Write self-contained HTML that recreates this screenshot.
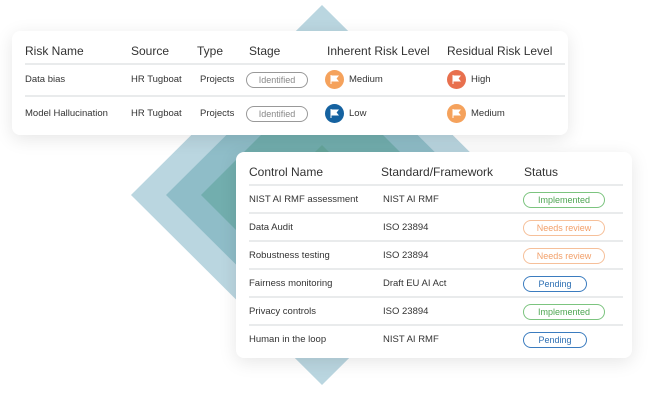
<!DOCTYPE html>
<html><head><style>
*{margin:0;padding:0;box-sizing:border-box}
body{width:650px;height:403px;background:#fff;position:relative;overflow:hidden;font-family:"Liberation Sans",sans-serif;color:#2b2b2b}
.card{position:absolute;background:#fff;border-radius:8px;box-shadow:0 4px 18px rgba(0,0,0,0.10)}
.t{position:absolute;white-space:nowrap}
.h{font-size:12px;color:#333}
.r{font-size:9.5px;color:#333}
.line{position:absolute;height:1.5px;background:#e9ebec}
.pill{position:absolute;border:1.3px solid #999;border-radius:9px;font-size:9px;text-align:center;line-height:14px;height:16px}
.ic{position:absolute;width:19px;height:19px;border-radius:50%}
.ic svg{position:absolute;left:5px;top:5px}
</style></head><body>
<svg width="650" height="403" style="position:absolute;left:0;top:0">
<polygon points="322,5 513,195 322,385 131,195" fill="#bad6e0"/>
<polygon points="322,40 478,195 322,350 166,195" fill="#8fbdc8"/>
<polygon points="322,74 443,195 322,316 201,195" fill="#72aeae"/>
<polygon points="322,145 372,195 322,245 272,195" fill="#66a69c"/>
</svg>

<div class="card" style="left:12px;top:31px;width:556px;height:104px">
<div class="t h" style="left:13px;top:13px">Risk Name</div>
<div class="t h" style="left:119px;top:13px">Source</div>
<div class="t h" style="left:185px;top:13px">Type</div>
<div class="t h" style="left:237px;top:13px">Stage</div>
<div class="t h" style="left:315px;top:13px">Inherent Risk Level</div>
<div class="t h" style="left:435px;top:13px">Residual Risk Level</div>
<div class="line" style="left:13px;top:32px;width:540px"></div>
<div class="t r" style="left:13px;top:43px">Data bias</div>
<div class="t r" style="left:119px;top:43px">HR Tugboat</div>
<div class="t r" style="left:188px;top:43px">Projects</div>
<div class="pill" style="left:234px;top:41px;width:62px;color:#888">Identified</div>
<div class="ic" style="left:313px;top:39px;background:#f5a25c"><svg width="9" height="9"><path d="M1 0v9M1 1h7l-2 2.5 2 2.5H1" fill="#fff" stroke="#fff" stroke-width="1"/></svg></div>
<div class="t r" style="left:337px;top:43px">Medium</div>
<div class="ic" style="left:435px;top:39px;background:#e8704e"><svg width="9" height="9"><path d="M1 0v9M1 1h7l-2 2.5 2 2.5H1" fill="#fff" stroke="#fff" stroke-width="1"/></svg></div>
<div class="t r" style="left:459px;top:43px">High</div>
<div class="line" style="left:13px;top:64px;width:540px"></div>
<div class="t r" style="left:13px;top:77px">Model Hallucination</div>
<div class="t r" style="left:119px;top:77px">HR Tugboat</div>
<div class="t r" style="left:188px;top:77px">Projects</div>
<div class="pill" style="left:234px;top:75px;width:62px;color:#888">Identified</div>
<div class="ic" style="left:313px;top:73px;background:#1562a0"><svg width="9" height="9"><path d="M1 0v9M1 1h7l-2 2.5 2 2.5H1" fill="#fff" stroke="#fff" stroke-width="1"/></svg></div>
<div class="t r" style="left:337px;top:77px">Low</div>
<div class="ic" style="left:435px;top:73px;background:#f5a25c"><svg width="9" height="9"><path d="M1 0v9M1 1h7l-2 2.5 2 2.5H1" fill="#fff" stroke="#fff" stroke-width="1"/></svg></div>
<div class="t r" style="left:459px;top:77px">Medium</div>
</div>

<div class="card" style="left:236px;top:152px;width:396px;height:206px">
<div class="t h" style="left:13px;top:13px">Control Name</div>
<div class="t h" style="left:145px;top:13px">Standard/Framework</div>
<div class="t h" style="left:288px;top:13px">Status</div>
<div class="line" style="left:13px;top:32px;width:374px"></div>
<div class="t r" style="left:13px;top:42px">NIST AI RMF assessment</div>
<div class="t r" style="left:147px;top:42px">NIST AI RMF</div>
<div class="pill" style="left:287px;top:40px;width:82px;border-color:#7cc47f;color:#4ea552">Implemented</div>
<div class="line" style="left:13px;top:60px;width:374px"></div>
<div class="t r" style="left:13px;top:70px">Data Audit</div>
<div class="t r" style="left:147px;top:70px">ISO 23894</div>
<div class="pill" style="left:287px;top:68px;width:82px;border-color:#f6c09a;color:#f2a06a">Needs review</div>
<div class="line" style="left:13px;top:88px;width:374px"></div>
<div class="t r" style="left:13px;top:98px">Robustness testing</div>
<div class="t r" style="left:147px;top:98px">ISO 23894</div>
<div class="pill" style="left:287px;top:96px;width:82px;border-color:#f6c09a;color:#f2a06a">Needs review</div>
<div class="line" style="left:13px;top:116px;width:374px"></div>
<div class="t r" style="left:13px;top:126px">Fairness monitoring</div>
<div class="t r" style="left:147px;top:126px">Draft EU AI Act</div>
<div class="pill" style="left:287px;top:124px;width:64px;border-color:#3b7cbf;color:#2d6fb3">Pending</div>
<div class="line" style="left:13px;top:144px;width:374px"></div>
<div class="t r" style="left:13px;top:154px">Privacy controls</div>
<div class="t r" style="left:147px;top:154px">ISO 23894</div>
<div class="pill" style="left:287px;top:152px;width:82px;border-color:#7cc47f;color:#4ea552">Implemented</div>
<div class="line" style="left:13px;top:172px;width:374px"></div>
<div class="t r" style="left:13px;top:182px">Human in the loop</div>
<div class="t r" style="left:147px;top:182px">NIST AI RMF</div>
<div class="pill" style="left:287px;top:180px;width:64px;border-color:#3b7cbf;color:#2d6fb3">Pending</div>
</div>
</body></html>
